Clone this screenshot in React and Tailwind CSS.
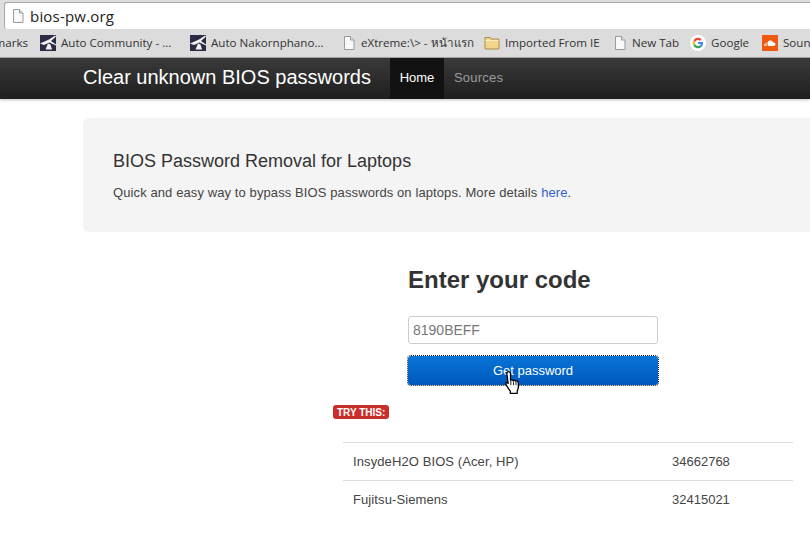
const font = { fontFamily: '"Liberation Sans", Arial, sans-serif' };

function PageIcon() {
  return (
    <svg width="14" height="16" viewBox="0 0 14 16" className="shrink-0">
      <path d="M2.500 1.500h6l3.500 3.500v9.500h-9.500z" fill="#f8f8f8" stroke="#9a9a9a" />
      <path d="M8.500 1.500v3.500h3.500" fill="#e4e4e4" stroke="#9a9a9a" />
    </svg>
  );
}

function AutoIcon() {
  return (
    <svg width="16" height="16" viewBox="0 0 16 16" className="shrink-0">
      <rect width="16" height="16" fill="#2b2b45" />
      <path d="M0 8.500 L9 4.500 L15 0.500 L16 1.500 L11 6 L16 9.500 L16 10.500 L9.500 7.500 L4 10 Z" fill="#f2f2f2" />
      <path d="M5.500 14.500 L8 8.500 L10.500 9.500 L12 14.500 Z" fill="#f2f2f2" />
    </svg>
  );
}

function FolderIcon() {
  return (
    <svg width="16" height="14" viewBox="0 0 16 14" className="shrink-0">
      <path d="M1 3V1.500h5l1 1.500h8v10H1z" fill="#f3d58c" stroke="#a98b4c" />
      <path d="M1.500 4.500h13" stroke="#fbeec5" />
    </svg>
  );
}

function GoogleIcon() {
  return (
    <svg width="16" height="16" viewBox="0 0 48 48" className="shrink-0">
      <circle cx="24" cy="24" r="24" fill="#fff" />
      <path fill="#EA4335" d="M24 15c2.500 0 4.500.9 6 2.300l4.500-4.500C31.700 10.200 28.200 8.500 24 8.500c-6.100 0-11.300 3.500-13.800 8.600l5.200 4C16.600 17.500 20 15 24 15z" />
      <path fill="#4285F4" d="M39 24.400c0-1.100-.1-2.200-.3-3.200H24v6.100h8.400c-.4 2-1.500 3.600-3.100 4.700l5 3.900c2.900-2.700 4.700-6.700 4.700-11.500z" />
      <path fill="#FBBC05" d="M15.400 26.900c-.3-.9-.5-1.900-.5-2.900s.2-2 .5-2.900l-5.200-4C9.100 19.200 8.500 21.500 8.500 24s.6 4.800 1.700 6.900l5.200-4z" />
      <path fill="#34A853" d="M24 39.500c4.200 0 7.700-1.400 10.300-3.800l-5-3.900c-1.400.9-3.200 1.500-5.300 1.500-4 0-7.400-2.700-8.600-6.100l-5.200 4C12.700 36 17.900 39.500 24 39.500z" />
    </svg>
  );
}

function SoundcloudIcon() {
  return (
    <svg width="16" height="16" viewBox="0 0 16 16" className="shrink-0">
      <rect width="16" height="16" fill="#ee5a12" />
      <path d="M6 11V6.500C6.500 6 7.500 5.500 8.500 5.500c1.300 0 2.300.9 2.600 2.100 1.300-.4 2.400.5 2.400 1.700S12.600 11 11.500 11z" fill="#fff" />
      <path d="M2.500 9v2M3.800 8v3M5 7v4" stroke="#fff" strokeWidth="0.7" />
    </svg>
  );
}

function HandCursor() {
  return (
    <svg width="22" height="26" viewBox="0 0 17 24">
      <path
        d="M4.500 1.500c1 0 1.700.7 1.700 1.700v6.300c.6-.7 2-.6 2.400.3.600-.6 2-.5 2.400.5.700-.5 2-.2 2.200.8.300 1.200.3 3.500.2 5-.1 1.500-.6 2.400-1 3.400v2H6v-2c-1-1.200-2.200-3-3.300-4.800C2 13.500 1.500 12.700 2 12c.6-.7 1.400-.4 2 .4l-1.200-9c0-1 .7-1.900 1.700-1.900z"
        fill="#fff"
        stroke="#000"
        strokeWidth="1.200"
        strokeLinejoin="round"
      />
      <path d="M6.500 10v4M9 10.500v3.500M11.300 11v3" stroke="#000" strokeWidth="0.8" />
    </svg>
  );
}

const bookmarks = [
  { label: "Auto Community - ...", icon: <AutoIcon />, w: "w-[150px]" },
  { label: "Auto Nakornphano...", icon: <AutoIcon />, w: "w-[152px]" },
  { label: "eXtreme:\\> - หน้าแรก", icon: <PageIcon />, w: "w-[142px]" },
  { label: "Imported From IE", icon: <FolderIcon />, w: "w-[129px]" },
  { label: "New Tab", icon: <PageIcon />, w: "w-[77px]" },
  { label: "Google", icon: <GoogleIcon />, w: "w-[72px]" },
  { label: "SoundCloud", icon: <SoundcloudIcon />, w: "w-[90px]" },
];

const codes = [
  ["InsydeH2O BIOS (Acer, HP)", "34662768"],
  ["Fujitsu-Siemens", "32415021"],
];

export default function App() {
  return (
    <div className="w-[810px] h-[540px] overflow-hidden bg-white" style={font}>
      {/* browser chrome */}
      <div className="h-[29px] pt-[2px] pl-[4px] bg-[#dedede]">
        <div className="h-[27px] flex items-center gap-[5px] pl-[6px] bg-white border-t border-l border-[#a8a8a8] rounded-tl-[3px] rounded-bl-[3px]">
          <PageIcon />
          <span className="text-[15px] text-[#222] tracking-[0.2px]" style={{ fontFamily: '"Open Sans", sans-serif' }}>
            bios-pw.org
          </span>
        </div>
      </div>
      <div className="h-[29px] flex items-center bg-[#dcdcdc] border-b border-[#a9a9a9] overflow-hidden whitespace-nowrap text-[11.6px] text-[#333]" style={{ fontFamily: '"Open Sans", "Noto Sans", sans-serif' }}>
        <span className="shrink-0 -ml-[33px] w-[73px] text-right pr-[12px]">Bookmarks</span>
        {bookmarks.map((b) => (
          <div key={b.label} className={`flex items-center gap-[5px] shrink-0 ${b.w}`}>
            {b.icon}
            <span>{b.label}</span>
          </div>
        ))}
      </div>

      {/* site navbar */}
      <div className="h-[41px] flex pl-[83px] bg-gradient-to-b from-[#3a3a3a] to-[#1f1f1f] shadow-[0_1px_3px_rgba(0,0,0,0.25)]">
        <div className="w-[307px] flex items-center pb-[3px] text-[20px] text-white">Clear unknown BIOS passwords</div>
        <div className="w-[54px] flex items-center justify-center pb-[2px] text-[13px] text-white bg-[#121212]">Home</div>
        <div className="flex items-center pl-[10px] pb-[2px] text-[13px] tracking-[0.2px] text-[#9d9d9d]">Sources</div>
      </div>

      <div className="pl-[83px] pt-[19px]">
        <div className="h-[114px] pl-[30px] pt-[32px] bg-[#f4f4f4] rounded-l-[6px]">
          <h2 className="text-[18px] leading-[22px] text-[#333]">BIOS Password Removal for Laptops</h2>
          <p className="mt-[11px] text-[13px] leading-[20px] tracking-[0.1px] text-[#444]">
            Quick and easy way to bypass BIOS passwords on laptops. More details{" "}
            <a className="text-[#2f5fd0]">here</a>.
          </p>
        </div>
      </div>

      {/* code form */}
      <div className="relative pt-[33px]">
        <div className="ml-[408px] w-[250px]">
          <h1 className="text-[24px] leading-[30px] font-bold text-[#333]">Enter your code</h1>
          <div className="mt-[21px] h-[28px] flex items-center pl-[4px] text-[14px] text-[#777] bg-white border border-[#ccc] rounded-[3px]">
            8190BEFF
          </div>
          <div className="relative mt-[12px] h-[29px] flex items-center justify-center text-[13px] text-white bg-gradient-to-b from-[#0a74d6] to-[#0058bd] rounded-[3px] outline-1 outline-dotted outline-[#222]">
            Get password
          </div>
        </div>
        {/* mouse pointer over the button */}
        <div className="absolute left-[502px] top-[138px]">
          <HandCursor />
        </div>

        <div className="ml-[333px] mt-[20px] w-fit h-[14px] px-[4px] flex items-center text-[10px] font-bold text-white bg-[#c9302c] rounded-[3px]">
          TRY THIS:
        </div>

        <div className="ml-[343px] mt-[23px] w-[450px] text-[13px] text-[#444]">
          {codes.map(([name, code]) => (
            <div key={code} className="h-[38px] flex items-center pl-[10px] border-t border-[#ddd]">
              <span className="w-[319px] tracking-[0.1px]">{name}</span>
              <span>{code}</span>
            </div>
          ))}
        </div>
      </div>
    </div>
  );
}
